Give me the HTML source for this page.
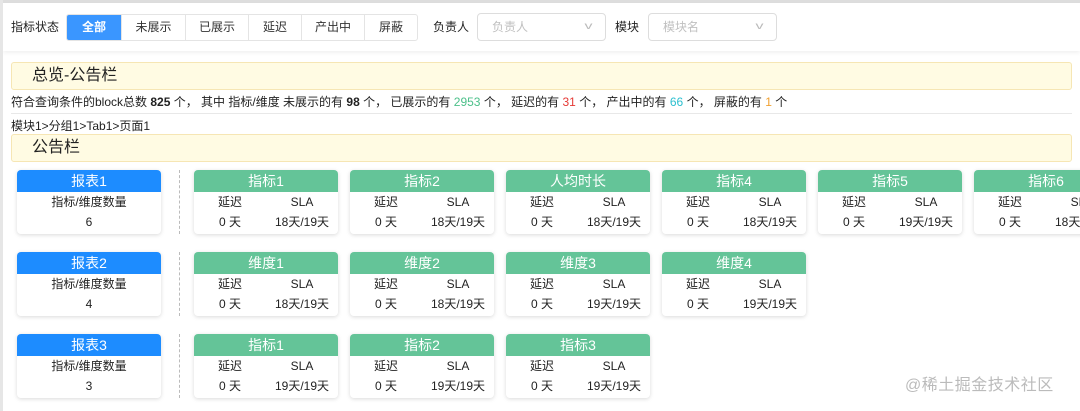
<!DOCTYPE html>
<html><head><meta charset="utf-8"><style>
*{box-sizing:border-box;margin:0;padding:0}
body{width:1080px;height:411px;overflow:hidden;background:#fff;font-family:"Liberation Sans","Noto Sans CJK SC",sans-serif;font-size:12px;color:#222;position:relative;line-height:1.2}
.a{position:absolute}
.topline{left:0;top:0;width:1080px;height:3px;background:#ddd}
.leftline{left:0;top:0;width:3px;height:411px;background:#e6e6e6}
.toolbar{left:3px;top:3px;width:1077px;height:48px;background:#fff;box-shadow:0 2px 4px rgba(0,0,0,.06)}
.btns{left:66px;top:14px;height:27px;display:flex;border:1px solid #e4e4e4;border-radius:3px;overflow:hidden}
.btns div{height:25px;line-height:25px;text-align:center;border-left:1px solid #e4e4e4;font-size:12px;color:#333}
.btns div:first-child{border-left:none;background:#3a96ff;color:#fff;font-weight:bold}
.sel{height:28px;border:1px solid #ddd;border-radius:4px;color:#c0c0c0;font-size:12px;line-height:26px;padding-left:14px}
.sel span{position:absolute;right:14px;top:0;color:#bbb;font-size:10px;transform:scaleX(1.6)}
.banner{left:11px;width:1061px;height:28px;background:#fffbe3;border:1px solid #f6e6b4;border-radius:3px;font-size:16px;line-height:26px;padding-left:20px;color:#222}
.card{width:144px;height:64px;background:#fff;border-radius:4px;box-shadow:0 1px 4px rgba(0,0,0,.15);overflow:hidden;font-size:12px}
.card .h{height:22px;line-height:22px;text-align:center;color:#fff;font-size:14px}
.blue .h{background:#1d8cff}
.green .h{background:#64c498}
.card .r{display:flex;height:20px;line-height:20px}
.card .r span{flex:1;text-align:center}
.blue .r{justify-content:center}
.dash{left:179px;width:0;height:64px;border-left:1px dashed #bbb}
</style></head><body>
<div class="a topline"></div>
<div class="a toolbar"></div>
<div class="a leftline"></div>
<div class="a" style="left:11px;top:20px;font-size:12px">指标状态</div>
<div class="a btns">
<div style="width:54px">全部</div><div style="width:64px">未展示</div><div style="width:63px">已展示</div><div style="width:53px">延迟</div><div style="width:63px">产出中</div><div style="width:53px">屏蔽</div>
</div>
<div class="a" style="left:433px;top:20px">负责人</div>
<div class="a sel" style="left:477px;top:13px;width:129px">负责人<span>v</span></div>
<div class="a" style="left:615px;top:20px">模块</div>
<div class="a sel" style="left:648px;top:13px;width:129px">模块名<span>v</span></div>

<div class="a banner" style="top:62px">总览-公告栏</div>
<div class="a" style="left:11px;top:95px;white-space:nowrap">符合查询条件的block总数 <b>825</b> 个， 其中 指标/维度 未展示的有 <b>98</b> 个， 已展示的有 <span style="color:#4cc08a">2953</span> 个， 延迟的有 <span style="color:#e53935">31</span> 个， 产出中的有 <span style="color:#2bbfcf">66</span> 个， 屏蔽的有 <span style="color:#f0a030">1</span> 个</div>
<div class="a" style="left:11px;top:113px;width:1061px;height:1px;background:#e8e8e8"></div>
<div class="a" style="left:11px;top:119px;line-height:14px">模块1&gt;分组1&gt;Tab1&gt;页面1</div>
<div class="a banner" style="top:134px">公告栏</div>

<!-- row1 -->
<div class="a card blue" style="left:17px;top:170px"><div class="h">报表1</div><div class="r"><span>指标/维度数量</span></div><div class="r"><span>6</span></div></div>
<div class="a dash" style="top:170px"></div>
<div class="a card green" style="left:194px;top:170px"><div class="h">指标1</div><div class="r"><span>延迟</span><span>SLA</span></div><div class="r"><span>0 天</span><span>18天/19天</span></div></div>
<div class="a card green" style="left:350px;top:170px"><div class="h">指标2</div><div class="r"><span>延迟</span><span>SLA</span></div><div class="r"><span>0 天</span><span>18天/19天</span></div></div>
<div class="a card green" style="left:506px;top:170px"><div class="h">人均时长</div><div class="r"><span>延迟</span><span>SLA</span></div><div class="r"><span>0 天</span><span>18天/19天</span></div></div>
<div class="a card green" style="left:662px;top:170px"><div class="h">指标4</div><div class="r"><span>延迟</span><span>SLA</span></div><div class="r"><span>0 天</span><span>18天/19天</span></div></div>
<div class="a card green" style="left:818px;top:170px"><div class="h">指标5</div><div class="r"><span>延迟</span><span>SLA</span></div><div class="r"><span>0 天</span><span>19天/19天</span></div></div>
<div class="a card green" style="left:974px;top:170px"><div class="h">指标6</div><div class="r"><span>延迟</span><span>SLA</span></div><div class="r"><span>0 天</span><span>18天/19天</span></div></div>

<!-- row2 -->
<div class="a card blue" style="left:17px;top:252px"><div class="h">报表2</div><div class="r"><span>指标/维度数量</span></div><div class="r"><span>4</span></div></div>
<div class="a dash" style="top:252px"></div>
<div class="a card green" style="left:194px;top:252px"><div class="h">维度1</div><div class="r"><span>延迟</span><span>SLA</span></div><div class="r"><span>0 天</span><span>18天/19天</span></div></div>
<div class="a card green" style="left:350px;top:252px"><div class="h">维度2</div><div class="r"><span>延迟</span><span>SLA</span></div><div class="r"><span>0 天</span><span>18天/19天</span></div></div>
<div class="a card green" style="left:506px;top:252px"><div class="h">维度3</div><div class="r"><span>延迟</span><span>SLA</span></div><div class="r"><span>0 天</span><span>19天/19天</span></div></div>
<div class="a card green" style="left:662px;top:252px"><div class="h">维度4</div><div class="r"><span>延迟</span><span>SLA</span></div><div class="r"><span>0 天</span><span>19天/19天</span></div></div>

<!-- row3 -->
<div class="a card blue" style="left:17px;top:334px"><div class="h">报表3</div><div class="r"><span>指标/维度数量</span></div><div class="r"><span>3</span></div></div>
<div class="a dash" style="top:334px"></div>
<div class="a card green" style="left:194px;top:334px"><div class="h">指标1</div><div class="r"><span>延迟</span><span>SLA</span></div><div class="r"><span>0 天</span><span>19天/19天</span></div></div>
<div class="a card green" style="left:350px;top:334px"><div class="h">指标2</div><div class="r"><span>延迟</span><span>SLA</span></div><div class="r"><span>0 天</span><span>19天/19天</span></div></div>
<div class="a card green" style="left:506px;top:334px"><div class="h">指标3</div><div class="r"><span>延迟</span><span>SLA</span></div><div class="r"><span>0 天</span><span>19天/19天</span></div></div>

<div class="a" style="left:905px;top:376px;font-size:16px;color:#bbb;letter-spacing:0.5px">@稀土掘金技术社区</div>
</body></html>
